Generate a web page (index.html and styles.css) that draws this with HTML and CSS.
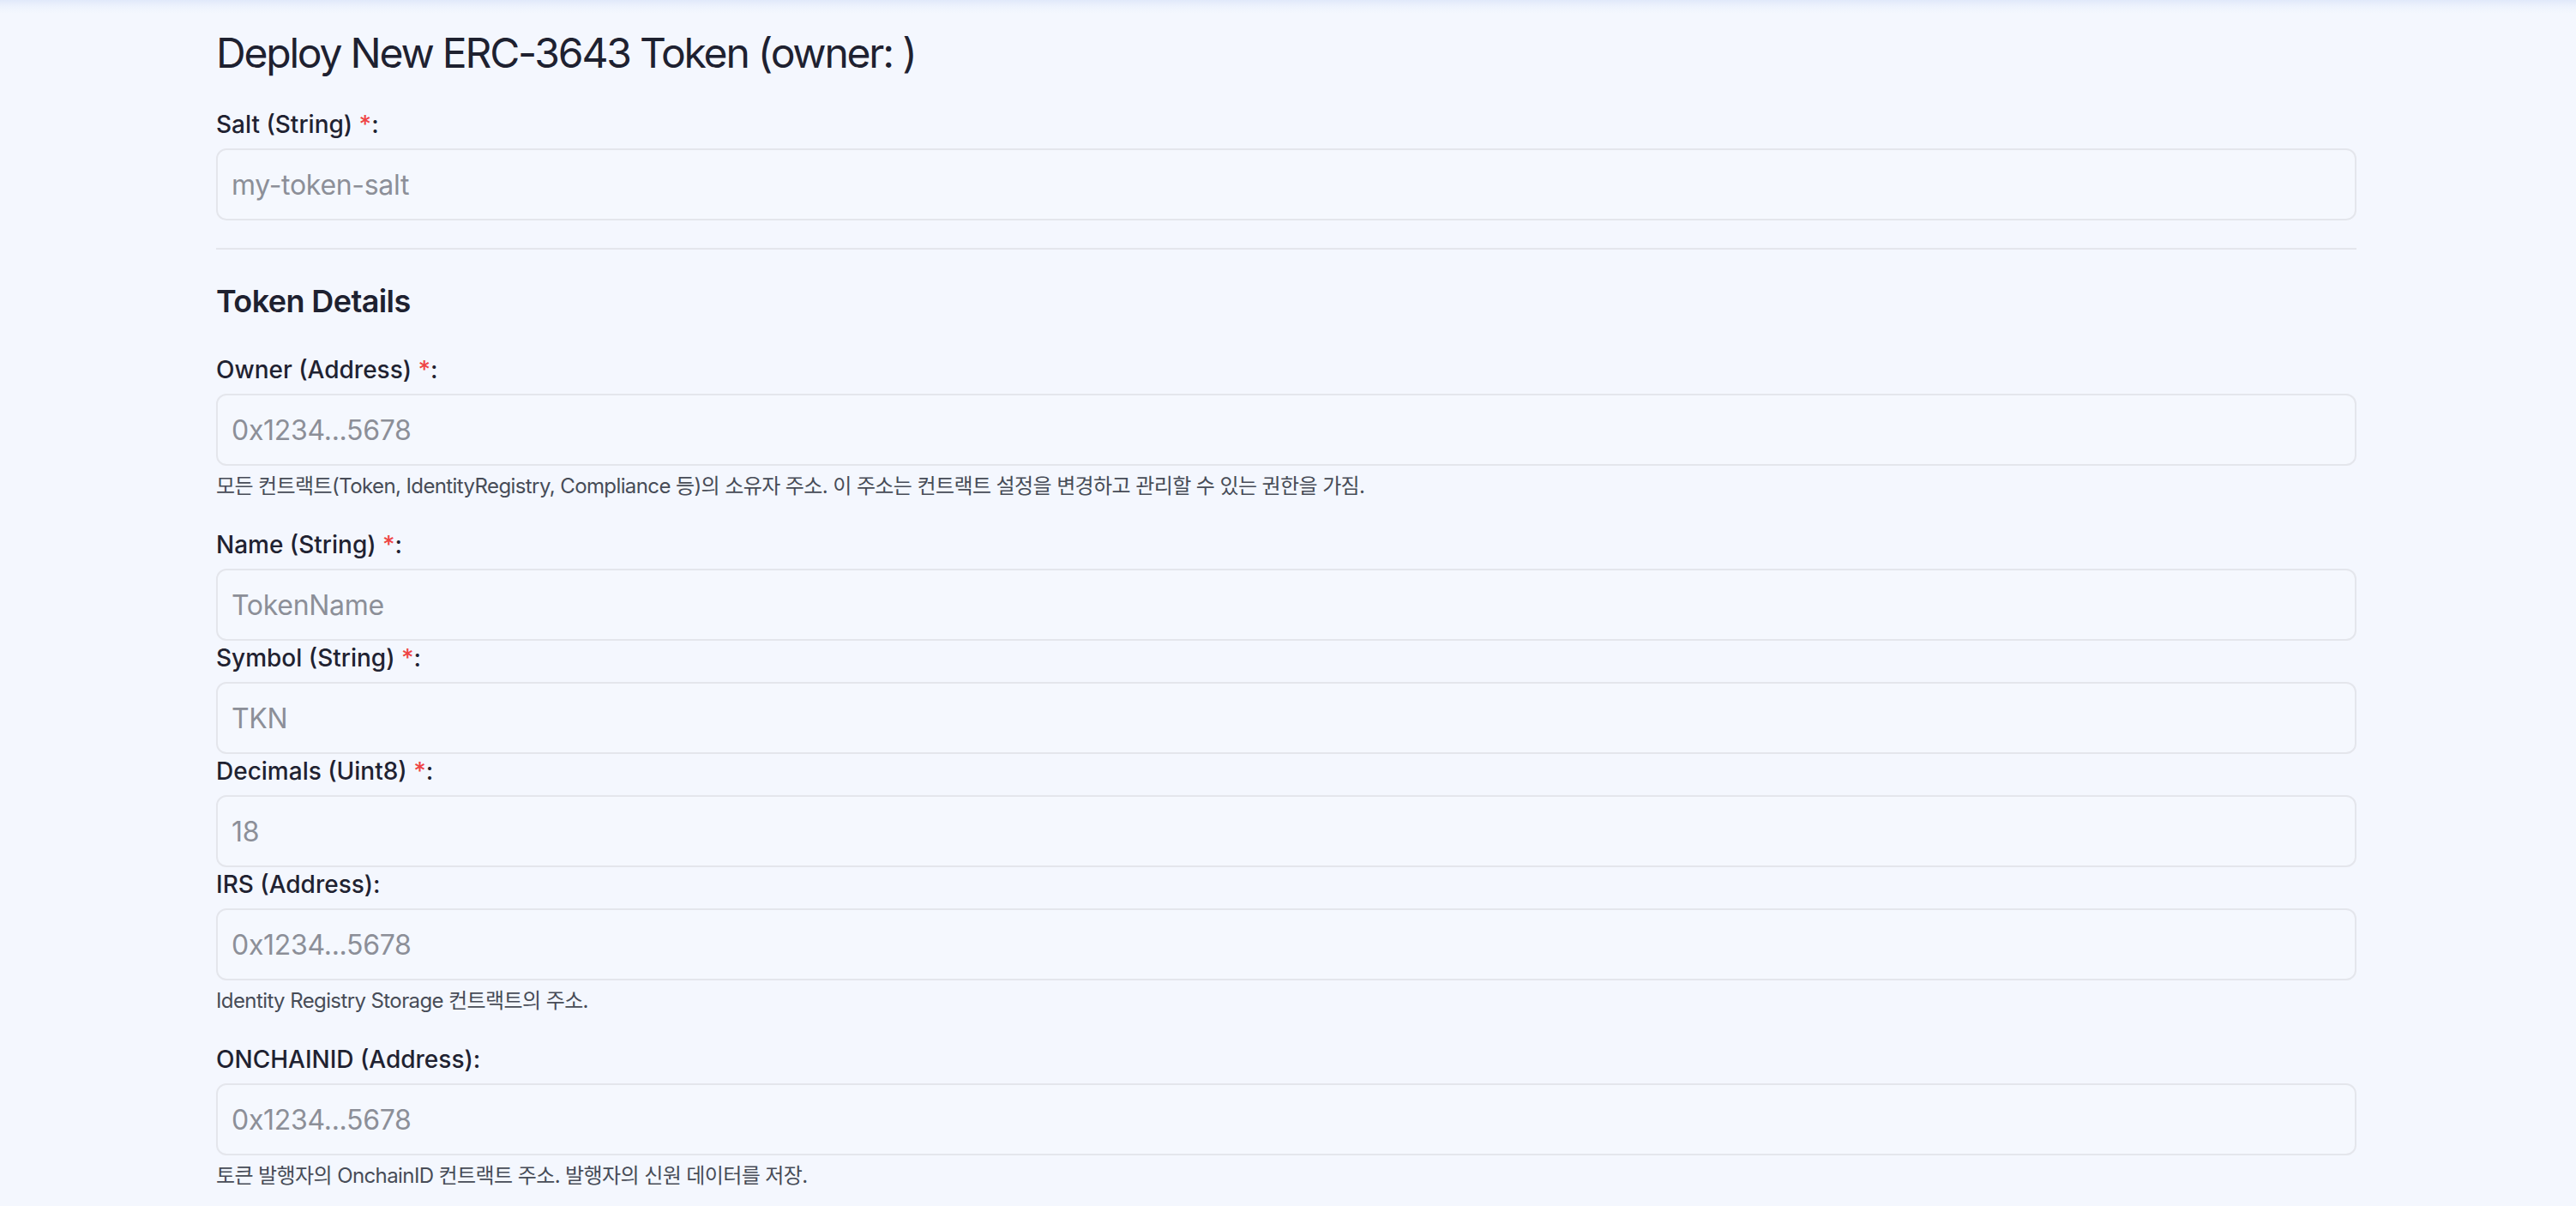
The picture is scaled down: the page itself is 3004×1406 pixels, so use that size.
FILE: index.html
```html
<!DOCTYPE html>
<html lang="ko">
<head>
<meta charset="utf-8">
<title>Deploy New ERC-3643 Token</title>
<link rel="stylesheet" href="styles.css">
</head>
<body>
<div class="page">
  <main class="container">
    <h1 class="title">Deploy New ERC-3643 Token (owner: )</h1>

    <div class="field">
      <label class="label">Salt (String) <span class="req">*</span>:</label>
      <input class="input" type="text" placeholder="my-token-salt">
    </div>

    <hr class="divider">

    <h2 class="section-title">Token Details</h2>

    <div class="field">
      <label class="label">Owner (Address) <span class="req">*</span>:</label>
      <input class="input" type="text" placeholder="0x1234...5678">
      <p class="help">모든 컨트랙트(Token, IdentityRegistry, Compliance 등)의 소유자 주소. 이 주소는 컨트랙트 설정을 변경하고 관리할 수 있는 권한을 가짐.</p>
    </div>

    <div class="field tight">
      <label class="label">Name (String) <span class="req">*</span>:</label>
      <input class="input" type="text" placeholder="TokenName">
    </div>

    <div class="field tight">
      <label class="label">Symbol (String) <span class="req">*</span>:</label>
      <input class="input" type="text" placeholder="TKN">
    </div>

    <div class="field tight">
      <label class="label">Decimals (Uint8) <span class="req">*</span>:</label>
      <input class="input" type="text" placeholder="18">
    </div>

    <div class="field">
      <label class="label">IRS (Address):</label>
      <input class="input" type="text" placeholder="0x1234...5678">
      <p class="help">Identity Registry Storage 컨트랙트의 주소.</p>
    </div>

    <div class="field">
      <label class="label">ONCHAINID (Address):</label>
      <input class="input" type="text" placeholder="0x1234...5678">
      <p class="help">토큰 발행자의 OnchainID 컨트랙트 주소. 발행자의 신원 데이터를 저장.</p>
    </div>
  </main>
</div>
</body>
</html>
```
FILE: styles.css
```css
html, body {
  margin: 0;
  padding: 0;
}

body {
  background: linear-gradient(to bottom, #e1e9fa 0px, #eef3fd 8px, #f4f7fe 16px) no-repeat, #f4f7fe;
  background-size: 100% 16px, auto;
  font-family: Inter, "Noto Sans CJK KR", "Noto Sans", sans-serif;
  color: #1f2231;
  height: 1406px;
  overflow: hidden;
}

.page {
  padding: 0 4px 0 0;
}

.container {
  max-width: 2496px;
  margin: 0 auto;
  padding-top: 30px;
}

.title {
  margin: 0 0 31px;
  font-size: 48px;
  line-height: 64px;
  font-weight: 400;
  color: #1e2130;
  letter-spacing: -2.2px;
}

.field {
  display: flex;
  flex-direction: column;
  margin-bottom: 32px;
}

.field.tight {
  margin-bottom: 0;
}

.label {
  font-size: 28px;
  line-height: 40px;
  font-weight: 500;
  color: #1f2231;
  margin-bottom: 8px;
}

.req {
  color: #ef4444;
}

.input {
  box-sizing: border-box;
  height: 84px;
  width: 100%;
  margin: 0;
  padding: 0 16px 0 16px;
  border: 2px solid #e4e6ec;
  border-radius: 12px;
  background: #f5f8fe;
  font-family: inherit;
  font-size: 32px;
  color: #1f2231;
  outline: none;
  letter-spacing: -0.3px;
}

.input::placeholder {
  color: #8c8f98;
  opacity: 1;
}

.help {
  margin: 8px 0 0;
  font-size: 24px;
  line-height: 32px;
  color: #474c57;
  letter-spacing: -0.6px;
}

.divider {
  margin: 0 0 32px;
  border: 0;
  height: 2px;
  background: #e4e6ec;
}

.section-title {
  margin: 0 0 32px;
  font-size: 36px;
  line-height: 56px;
  font-weight: 600;
  color: #1e2130;
  letter-spacing: -0.6px;
}
```
